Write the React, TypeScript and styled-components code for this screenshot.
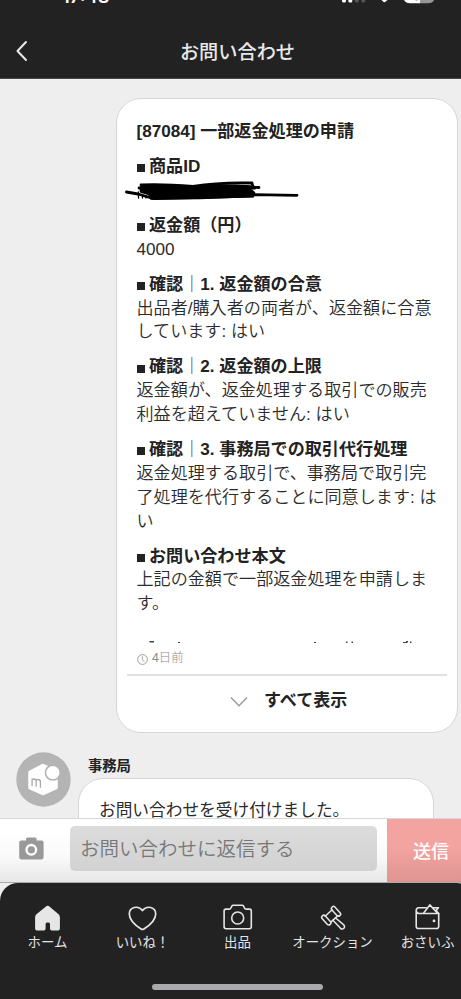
import React from 'react';
import styled, { createGlobalStyle } from 'styled-components';

const GlobalStyle = createGlobalStyle`
  * { box-sizing: border-box; }
  html, body { margin: 0; overflow: hidden; background: #222; }
`;

const Viewport = styled.div`
  width: 461px;
  height: 999px;
  overflow: hidden;
  font-family: 'Liberation Sans', 'Noto Sans CJK JP', sans-serif;
  color: #222;
`;

/* The phone surface is slightly wider than the visible window. */
const Screen = styled.div`
  width: 475px;
  height: 999px;
  display: flex;
  flex-direction: column;
  background: #eee;
`;

const Header = styled.header`
  height: 79px;
  flex: none;
  background: #222;
  border-bottom: 1px solid #484848;
  color: #e8e8e8;
`;

const StatusBar = styled.div`
  height: 24px;
  display: flex;
  align-items: flex-start;
  justify-content: space-between;
  padding: 0 40px 0 62px;
  overflow: hidden;
`;

const Clock = styled.span`
  font: 600 18.4px/20px Inter, sans-serif;
  color: #fff;
  margin-top: -14px;
`;

const StatusIcons = styled.svg`
  display: block;
  width: 94px;
  height: 4px;
`;

const TitleBar = styled.div`
  height: 54px;
  display: grid;
  grid-template-columns: 60px 1fr 60px;
  align-items: center;
`;

const BackIcon = styled.svg`
  width: 14px;
  height: 22px;
  margin: -1px 0 0 15px;
`;

const Title = styled.h1`
  margin: 3px 0 0;
  font-size: 19.2px;
  line-height: 28px;
  font-weight: 500;
  text-align: center;
`;

const Thread = styled.main`
  height: 739px;
  flex: none;
  overflow: hidden;
  padding: 19px 17px 0 16px;
`;

const Bubble = styled.article`
  width: 342px;
  height: 635px;
  margin-left: 100px;
  background: #fff;
  border: 1px solid #d6d6d6;
  border-radius: 25px;
  padding: 21px 10px 0;
  font-size: 17.1px;
  line-height: 23.9px;
`;

const Content = styled.div`
  height: 524px;
  padding: 0 0 0 9.5px;
`;

const Subject = styled.h2`
  margin: 0 0 11px;
  font-size: 17.1px;
  line-height: 24px;
  font-weight: 600;
  white-space: nowrap;
`;

const Section = styled.section`
  margin-bottom: 11px;
`;

const Heading = styled.h3`
  margin: 0;
  height: 23.9px;
  display: flex;
  align-items: center;
  font-size: 17.1px;
  font-weight: 600;
  white-space: pre;
`;

const Square = styled.span`
  width: 8px;
  height: 8px;
  margin: 3px 4px 0 .5px;
  background: #222;
`;

const Divider = styled.span`
  font-weight: 300;
`;

const Line = styled.div`
  height: 23.9px;
  white-space: pre;
  font-weight: 350;
  color: #2b2b2b;
`;

const Scribble = styled.svg`
  display: block;
  width: 175px;
  height: 24px;
  margin-left: -11.5px;
  overflow: visible;
`;

const CutLine = styled.svg`
  display: block;
  width: 290px;
  height: 2px;
  margin-top: 25px;
`;

const Time = styled.div`
  height: 30px;
  display: flex;
  align-items: center;
  gap: 4px;
  padding-left: 10px;
  font-size: 12.3px;
  font-weight: 300;
  color: #8a8a8a;
  svg { width: 11px; height: 11px; }
`;

const ShowAll = styled.button`
  width: 100%;
  height: 57px;
  border: 0;
  border-top: 2px solid #e0e0e0;
  background: none;
  display: flex;
  align-items: center;
  gap: 16px;
  padding: 0 0 6px 103px;
  font: 600 17px/24px 'Liberation Sans', 'Noto Sans CJK JP', sans-serif;
  color: #222;
  svg { width: 18px; height: 12px; margin-top: 2px; }
`;

const Reply = styled.div`
  display: flex;
  align-items: flex-start;
  gap: 7px;
  margin-top: 19px;
`;

const Avatar = styled.svg`
  width: 55px;
  height: 55px;
  flex: none;
`;

const ReplyBody = styled.div`
  width: 356px;
`;

const Sender = styled.div`
  height: 26px;
  padding: 4px 0 0 10px;
  font-size: 14.3px;
  line-height: 20px;
  font-weight: 600;
`;

const ReplyBubble = styled.div`
  height: 80px;
  background: #fff;
  border: 1px solid #d6d6d6;
  border-radius: 25px;
  padding: 20px 20px;
  font-size: 16.7px;
  line-height: 24px;
  white-space: nowrap;
  color: #2b2b2b;
`;

const Composer = styled.form`
  height: 65px;
  flex: none;
  display: flex;
  background: linear-gradient(#fff 15%, #fafafa 60%, #e6e6e6);
  border-top: 1px solid #d8d8d8;
  border-bottom: 1px solid #aaa;
`;

const Attach = styled.button`
  width: 70px;
  border: 0;
  padding: 0 0 5px 19px;
  background: none;
  display: flex;
  align-items: center;
  svg { width: 25px; height: 23px; }
`;

const Field = styled.div`
  width: 307px;
  height: 45px;
  margin: 7px 10px 0 0;
  padding: 0 10px 3px;
  border-radius: 5px;
  background: linear-gradient(#dcdcdc, #d2d2d2);
  display: flex;
  align-items: center;
  font-size: 19.5px;
  font-weight: 350;
  color: #777;
  white-space: nowrap;
`;

const Send = styled.button`
  width: 88px;
  border: 0;
  padding: 0 0 2px;
  background: linear-gradient(#f3a3a0 45%, #df9592);
  color: #fff;
  font: 500 18px 'Liberation Sans', 'Noto Sans CJK JP', sans-serif;
`;

const NavShell = styled.footer`
  flex: 1;
  background: #222;
  border-radius: 18px 18px 0 0;
  display: flex;
  flex-direction: column;
  align-items: center;
`;

const Tabs = styled.nav`
  width: 475px;
  height: 100.5px;
  display: grid;
  grid-template-columns: repeat(5, 95px);
`;

const Tab = styled.a`
  display: flex;
  flex-direction: column;
  align-items: center;
  padding-top: 19px;
  font-size: 13.4px;
  line-height: 20px;
  color: #e4e4e4;
  white-space: nowrap;
  svg { width: 32px; height: 31px; flex: none; }
`;

const HomeIndicator = styled.div`
  width: 171px;
  height: 6px;
  border-radius: 3px;
  background: #a9a8aa;
`;

const HomeIcon = () => (
  <svg viewBox="0 0 32 31">
    <path fill="#e6e6e6" d="M13.4 4.9 Q15.7 2.8 18 4.9 L26 11.7 Q27.9 13 27.9 15.3 V26 Q27.9 28.6 25.3 28.6 H19.8 Q18 28.6 18 26.5 V22 Q18 20.6 15.8 20.6 Q13.6 20.6 13.6 22 V26.5 Q13.6 28.6 11.8 28.6 H5.7 Q3.1 28.6 3.1 26 V15.3 Q3.1 13 5 11.7 Z" />
  </svg>
);

const HeartIcon = () => (
  <svg viewBox="0 0 32 31" fill="none" stroke="#e6e6e6" strokeWidth="1.7" strokeLinejoin="round">
    <path d="M14.1 27 C8 23 2.3 18 2.3 11.9 C2.3 5 11.3 2.9 15.5 8.6 C19.7 2.9 28.7 5 28.7 11.9 C28.7 18 23 23 16.9 27 Q15.5 27.9 14.1 27 Z" />
  </svg>
);

const CameraIcon = () => (
  <svg viewBox="0 0 32 31" fill="none" stroke="#e6e6e6" strokeWidth="1.6" strokeLinejoin="round">
    <path d="M4 7.1 H7.2 Q8.4 7.1 8.9 6 L10 3.8 Q10.3 3.2 11.1 3.2 H20.3 Q21.1 3.2 21.4 3.8 L22.5 6 Q23 7.1 24.2 7.1 H27.4 Q29.3 7.1 29.3 9 V24.8 Q29.3 26.7 27.4 26.7 H4 Q2.1 26.7 2.1 24.8 V9 Q2.1 7.1 4 7.1 Z" />
    <circle cx="15.7" cy="16" r="6" />
  </svg>
);

const HammerIcon = () => (
  <svg viewBox="0 0 32 31" fill="none" stroke="#e6e6e6" strokeWidth="1.5" strokeLinejoin="round" strokeLinecap="round">
    <rect x="13.2" y="7.2" width="11.6" height="4.2" rx="2.1" transform="rotate(48 19 9.3)" />
    <rect x="3.5" y="16" width="11.6" height="4.2" rx="2.1" transform="rotate(48 9.3 18.1)" />
    <path d="M15.2 7.7 L8.1 14.2 M20.9 13.6 L14.4 19.6" />
    <path d="M18.6 16 L26.5 22.6 Q28.4 24.6 26.9 26.3 Q25.2 28 23.3 26.1 L15.9 18.3" />
  </svg>
);

const WalletIcon = () => (
  <svg viewBox="0 0 32 31" fill="none" stroke="#e6e6e6" strokeWidth="1.6" strokeLinejoin="round" strokeLinecap="round">
    <path d="M14.3 5.7 H6.8 Q4.2 5.7 4.2 8.5 V24.2 Q4.2 26.5 6.5 26.5 H24.5 Q26.7 26.5 26.7 24.2 V11.5 H7 Q4.2 11.2 4.2 8.5" />
    <path d="M11.5 11.2 L17.8 2.9 L24.8 10.5 M20.5 5.7 H26.5 L24 8.4 L26.7 11.5" />
    <circle cx="22" cy="18.9" r="1.4" fill="#e6e6e6" stroke="none" />
  </svg>
);

const tabs = [
  { label: 'ホーム', Icon: HomeIcon },
  { label: 'いいね！', Icon: HeartIcon },
  { label: '出品', Icon: CameraIcon },
  { label: 'オークション', Icon: HammerIcon },
  { label: 'おさいふ', Icon: WalletIcon },
];

const confirmations = [
  { title: '1. 返金額の合意', lines: ['出品者/購入者の両者が、返金額に合意', 'しています: はい'] },
  { title: '2. 返金額の上限', lines: ['返金額が、返金処理する取引での販売', '利益を超えていません: はい'] },
  { title: '3. 事務局での取引代行処理', lines: ['返金処理する取引で、事務局で取引完', '了処理を代行することに同意します: は', 'い'] },
];

export default function App() {
  return (
    <Viewport lang="ja">
      <GlobalStyle />
      <Screen>
        <Header>
          <StatusBar>
            <Clock>17:48</Clock>
            <StatusIcons viewBox="0 0 94 4">
              <g fill="#fff">
                <rect x="1" y="-5" width="4" height="7.4" rx="1.5" />
                <rect x="7.3" y="-5" width="4" height="7.4" rx="1.5" />
                <path d="M40.5 0 H46.5 L44 2 Q43.3 2.6 42.6 2 Z" />
                <path d="M63 0 H79 V3.3 H69 Q65 3.3 63 0" />
              </g>
              <g fill="#555">
                <rect x="13.8" y="-5" width="4" height="7.4" rx="1.5" />
                <rect x="20.3" y="-5" width="4" height="7.4" rx="1.5" />
              </g>
              <path d="M79 0 H93 Q91.5 3.3 87 3.3 H79 Z" fill="#969696" />
              <path d="M74 0 H77 L75.5 1.2 Z" fill="#bbb" />
            </StatusIcons>
          </StatusBar>
          <TitleBar>
            <BackIcon viewBox="0 0 14 22" fill="none" stroke="#e8e8e8" strokeWidth="2" strokeLinecap="round" strokeLinejoin="round">
              <path d="M11 2 L2.5 11 L11 20" />
            </BackIcon>
            <Title>お問い合わせ</Title>
          </TitleBar>
        </Header>

        <Thread>
          <Bubble>
            <Content>
              <Subject>[87084] 一部返金処理の申請</Subject>
              <Section>
                <Heading><Square />商品ID</Heading>
                <Scribble viewBox="0 0 175 24" fill="none" stroke="#000" strokeLinecap="round" strokeLinejoin="round">
                  <path strokeWidth="2.8" d="M1.5 13 L13 15 L28 19.5 L128 17 M16 6 Q38 5 68 7.5 Q95 3 127 4 L128 8 L134 8.5 M14 9 L130 9 M126 15.5 L172 16.3" />
                  <path fill="#000" strokeWidth="2.6" d="M16 8.5 Q45 7 67 8.5 Q92 5 126 7.5 L124 9.5 L129 14 L128 17 L75 19 L26 19.5 L24 15 L16 12.5 Z" />
                  <path strokeWidth="1.3" d="M13.5 13 V19 M17.5 16 V19 M21 16.5 V19" />
                </Scribble>
              </Section>
              <Section>
                <Heading><Square />返金額（円）</Heading>
                <Line>4000</Line>
              </Section>
              {confirmations.map(({ title, lines }) => (
                <Section key={title}>
                  <Heading><Square />確認<Divider>｜</Divider>{title}</Heading>
                  {lines.map((text) => <Line key={text}>{text}</Line>)}
                </Section>
              ))}
              <Section>
                <Heading><Square />お問い合わせ本文</Heading>
                <Line>上記の金額で一部返金処理を申請しま</Line>
                <Line>す。</Line>
              </Section>
              <CutLine viewBox="0 0 290 2" fill="#444">
                <path d="M12 0 H17 V1.5 H13 Z M41 1 H43 V2 H41 Z M177 1 H179 V2 H177 Z M209 .5 H210.5 V2 H209 Z M214.5 .5 H216 V2 H214.5 Z M266 1 H270 V2 H266 Z M269 0 H271 V1.5 H269 Z M273 .5 H274.5 V2 H273 Z" />
              </CutLine>
            </Content>
            <Time>
              <svg viewBox="0 0 11 11" fill="none" stroke="#929292" strokeWidth=".9">
                <circle cx="5.5" cy="5.5" r="4.9" />
                <path d="M5.4 2.4 V5.8 L7.3 7.8" />
              </svg>
              4日前
            </Time>
            <ShowAll type="button">
              <svg viewBox="0 0 18 12" fill="none" stroke="#999" strokeWidth="1.4">
                <path d="M1 1.5 L9 9.8 L17 1.5" />
              </svg>
              すべて表示
            </ShowAll>
          </Bubble>

          <Reply>
            <Avatar viewBox="0 0 54 54">
              <circle cx="27" cy="27" r="26.7" fill="#b4b4b4" />
              <path fill="#fff" d="M26.5 11.5 L41 17.5 V35 Q41 36 40 36.5 L27.5 42.2 Q26.5 42.6 25.5 42.2 L13 36.5 Q12 36 12 35 V20 Q12 19 13 18.5 L25.5 11.8 Z" />
              <circle cx="36.2" cy="20.2" r="7.3" fill="#fff" stroke="#b4b4b4" strokeWidth="1.6" />
              <path d="M15.8 33.5 V26 M15.8 28.5 Q16 26.3 18 26.5 Q19.8 26.7 19.8 29 V34 M19.8 29 Q20 26.7 22 27 Q24 27.3 24 29.5 V35" fill="none" stroke="#aaa" strokeWidth="1.3" />
            </Avatar>
            <ReplyBody>
              <Sender>事務局</Sender>
              <ReplyBubble>お問い合わせを受け付けました。</ReplyBubble>
            </ReplyBody>
          </Reply>
        </Thread>

        <Composer>
          <Attach type="button" aria-label="カメラ">
            <svg viewBox="0 0 25 23">
              <path fill="#999" d="M2.3 3.5 H7 V2.3 Q7 .6 8.7 .6 H16 Q17.7 .6 17.7 2.3 V3.5 H22.5 Q24.6 3.5 24.6 5.6 V20.3 Q24.6 22.4 22.5 22.4 H2.3 Q.2 22.4 .2 20.3 V5.6 Q.2 3.5 2.3 3.5 Z" />
              <circle cx="12.3" cy="12.8" r="4.8" fill="none" stroke="#fff" strokeWidth="2.3" />
            </svg>
          </Attach>
          <Field>お問い合わせに返信する</Field>
          <Send type="button">送信</Send>
        </Composer>

        <NavShell>
          <Tabs>
            {tabs.map(({ label, Icon }) => (
              <Tab key={label}><Icon />{label}</Tab>
            ))}
          </Tabs>
          <HomeIndicator />
        </NavShell>
      </Screen>
    </Viewport>
  );
}
